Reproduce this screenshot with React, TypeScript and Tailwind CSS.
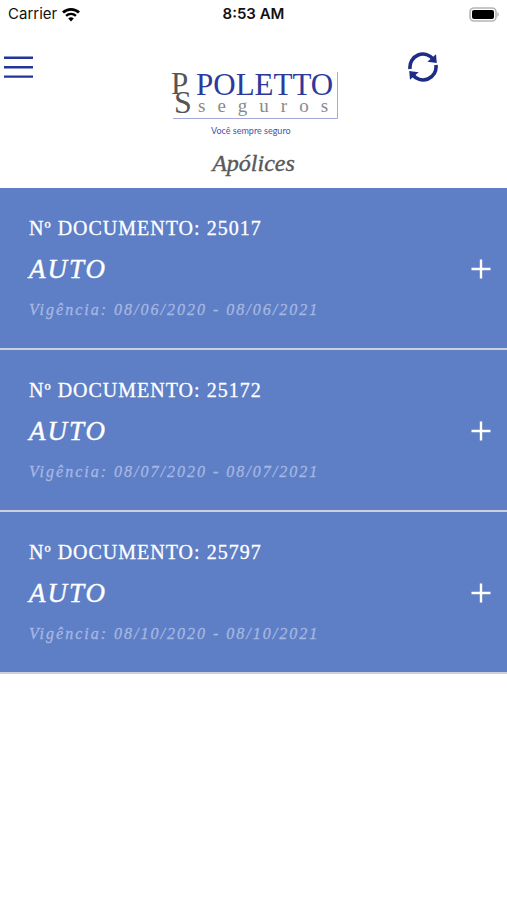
const policies = [
  { id: "25017", type: "AUTO", period: "08/06/2020 - 08/06/2021" },
  { id: "25172", type: "AUTO", period: "08/07/2020 - 08/07/2021" },
  { id: "25797", type: "AUTO", period: "08/10/2020 - 08/10/2021" },
];

export default function App() {
  return (
    <div className="w-full min-h-screen bg-white font-['Liberation_Serif',serif]">
      <StatusBar />
      <Header />
      <h1 className="h-12 pt-2 text-center text-[24px] leading-[30px] italic text-[#58585a] [-webkit-text-stroke:0.4px]">
        Apólices
      </h1>
      <main className="flex flex-col">
        {policies.map((policy) => (
          <PolicyCard key={policy.id} policy={policy} />
        ))}
      </main>
    </div>
  );
}

const StatusBar = () => {
  return (
    <div className="grid grid-cols-3 items-center h-7 px-2 font-['Inter',sans-serif] text-[15px] leading-5 text-[#111111]">
      <div className="flex items-center gap-1">
        <span>Carrier</span>
        <svg width="20" height="15" viewBox="0 0 20 15" fill="none" aria-hidden="true">
          <path d="M2 5.6a11.4 11.4 0 0 1 16 0" stroke="#000" strokeWidth="2.8" />
          <path d="M5.1 8.9a7 7 0 0 1 9.8 0" stroke="#000" strokeWidth="2.4" />
          <path d="M10 14.4 7.2 11.5a4 4 0 0 1 5.6 0z" fill="#000" />
        </svg>
      </div>
      <span className="text-center font-semibold">8:53 AM</span>
      <svg className="justify-self-end" width="30" height="15" viewBox="0 0 30 15" aria-hidden="true">
        <rect x="1" y="1" width="26" height="13" rx="4" fill="#fff" stroke="#b5b5b5" strokeWidth="1.6" />
        <rect x="3" y="3" width="22" height="9" rx="2" fill="#000" />
        <path d="M28.3 5.2c2 .8 2 3.8 0 4.6z" fill="#b5b5b5" />
      </svg>
    </div>
  );
};

const Header = () => {
  return (
    <header className="grid grid-cols-3 items-start h-28 pt-6">
      <button className="justify-self-start pl-1 pt-1" aria-label="Menu">
        <svg width="29" height="23" viewBox="0 0 29 23" stroke="#23359a" strokeWidth="2.4">
          <path d="M0 1.8h29M0 11.2h29M0 20.6h29" />
        </svg>
      </button>
      <Logo />
      <button className="justify-self-center" aria-label="Atualizar">
        <svg width="30" height="30" viewBox="0 0 30 30" fill="none">
          <path d="M2.1 17A13 13 0 0 1 25.6 7.6" stroke="#1f2c87" strokeWidth="3.6" />
          <path d="M27.9 13A13 13 0 0 1 4.4 22.4" stroke="#1f2c87" strokeWidth="3.6" />
          <path d="M28 2.2 28.8 11 19.4 9.8z" fill="#1f2c87" />
          <path d="M2 27.8 1.2 19 10.6 20.2z" fill="#1f2c87" />
        </svg>
      </button>
    </header>
  );
};

const Logo = () => {
  return (
    <svg className="w-full overflow-visible" viewBox="0 0 169 88" role="img" aria-label="Poletto Seguros">
      <g fontFamily="Liberation Serif, serif">
        <text x="2" y="42" fontSize="31" fill="#555555">P</text>
        <text x="5" y="61" fontSize="32" fill="#555555">S</text>
        <text x="27" y="43" fontSize="31" fill="#2b3a9b">POLETTO</text>
        <text x="29" y="60" fontSize="19" letterSpacing="12" fill="#8a8a8a">seguros</text>
      </g>
      <path d="M4 66.5H168.5V20" fill="none" stroke="#a3a8d8" />
      <text x="42" y="82" fontFamily="Lato, sans-serif" fontSize="9" fill="#4852a5">
        Você sempre seguro
      </text>
    </svg>
  );
};

const PolicyCard = ({ policy }: any) => {
  return (
    <section className="flex items-center justify-between pl-[29px] pr-4 pt-[25px] pb-[23px] border-b-2 border-[#cbd0dc] bg-[#5e7ec6] text-white">
      <div className="flex flex-col">
        <h2 className="text-[20px] leading-[30px] tracking-[1px] [-webkit-text-stroke:0.3px]">
          Nº DOCUMENTO: {policy.id}
        </h2>
        <p className="py-1 text-[27px] leading-[44px] italic tracking-[2px] [-webkit-text-stroke:0.4px]">
          {policy.type}
        </p>
        <p className="text-[16px] leading-[30px] italic tracking-[2px] text-[#a5b8e2] [-webkit-text-stroke:0.3px]">
          Vigência: {policy.period}
        </p>
      </div>
      <button aria-label={`Ver documento ${policy.id}`}>
        <svg width="20" height="20" viewBox="0 0 20 20" stroke="#fff" strokeWidth="2.4">
          <path d="M10 0.5v19M0.5 10h19" />
        </svg>
      </button>
    </section>
  );
};
